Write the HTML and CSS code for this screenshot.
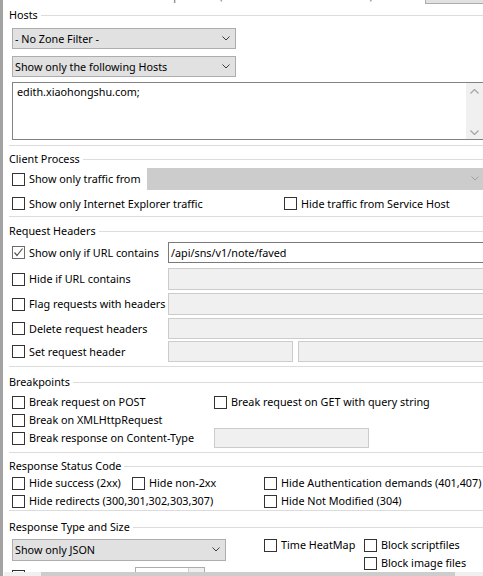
FILE: index.html
```html
<!DOCTYPE html>
<html>
<head>
<meta charset="utf-8">
<title>Filters</title>
<link rel="stylesheet" href="styles.css">
</head>
<body>
<div class="panel">
  <div class="topstrip">
    <span class="hint">FiddlerScript offers (click Rules &gt; Customize Rules).</span>
    <span class="topbtn"></span>
  </div>

  <div class="legend lg-hosts"><span>Hosts</span></div>
  <div class="combo combo-zone"><span>- No Zone Filter -</span><svg class="chev" width="8" height="5" viewBox="0 0 8 5"><polyline points="0.5,0.5 4,4 7.5,0.5"/></svg></div>
  <div class="combo combo-hosts"><span>Show only the following Hosts</span><svg class="chev" width="8" height="5" viewBox="0 0 8 5"><polyline points="0.5,0.5 4,4 7.5,0.5"/></svg></div>
  <div class="textarea">
    <span class="ta-text">edith.xiaohongshu.com;</span>
    <div class="vscroll">
      <svg class="sarrow" width="9" height="5" viewBox="0 0 9 5"><polyline points="0.5,4.5 4.5,0.5 8.5,4.5"/></svg>
      <svg class="sarrow" width="9" height="5" viewBox="0 0 9 5"><polyline points="0.5,0.5 4.5,4.5 8.5,0.5"/></svg>
    </div>
  </div>
  <div class="sep sep-hosts"></div>

  <div class="legend lg-client"><span>Client Process</span></div>
  <div class="cp-row1">
    <label class="chk"><span class="box"></span><span class="txt">Show only traffic from</span></label>
    <div class="combo combo-dis"><span></span><svg class="chev" width="8" height="5" viewBox="0 0 8 5"><polyline points="0.5,0.5 4,4 7.5,0.5"/></svg></div>
  </div>
  <div class="cp-row2">
    <label class="chk"><span class="box"></span><span class="txt">Show only Internet Explorer traffic</span></label>
    <label class="chk"><span class="box"></span><span class="txt">Hide traffic from Service Host</span></label>
  </div>
  <div class="sep sep-client"></div>

  <div class="legend lg-req"><span>Request Headers</span></div>
  <div class="rh-row rh-first">
    <label class="chk"><span class="box checked"><svg width="11" height="11" viewBox="0 0 11 11"><polyline points="1.5,5.5 4,8.5 9.5,1.5"/></svg></span><span class="txt">Show only if URL contains</span></label>
    <div class="field field-on">/api/sns/v1/note/faved</div>
  </div>
  <div class="rh-row rh-hide">
    <label class="chk"><span class="box"></span><span class="txt">Hide if URL contains</span></label>
    <div class="field"></div>
  </div>
  <div class="rh-row rh-flag">
    <label class="chk"><span class="box"></span><span class="txt">Flag requests with headers</span></label>
    <div class="field"></div>
  </div>
  <div class="rh-row rh-del">
    <label class="chk"><span class="box"></span><span class="txt">Delete request headers</span></label>
    <div class="field"></div>
  </div>
  <div class="rh-row rh-set">
    <label class="chk"><span class="box"></span><span class="txt">Set request header</span></label>
    <div class="field field-name"></div>
    <div class="field field-value"></div>
  </div>
  <div class="sep sep-req"></div>

  <div class="legend lg-bp"><span>Breakpoints</span></div>
  <div class="bp-row bp-first">
    <label class="chk"><span class="box"></span><span class="txt">Break request on POST</span></label>
    <label class="chk"><span class="box"></span><span class="txt">Break request on GET with query string</span></label>
  </div>
  <div class="bp-row">
    <label class="chk"><span class="box"></span><span class="txt">Break on XMLHttpRequest</span></label>
  </div>
  <div class="bp-row bp-last">
    <label class="chk"><span class="box"></span><span class="txt">Break response on Content-Type</span></label>
    <div class="field field-ct"></div>
  </div>
  <div class="sep sep-bp"></div>

  <div class="legend lg-status"><span>Response Status Code</span></div>
  <div class="st-row st-first">
    <label class="chk"><span class="box"></span><span class="txt">Hide success (2xx)</span></label>
    <label class="chk"><span class="box"></span><span class="txt">Hide non-2xx</span></label>
    <label class="chk"><span class="box"></span><span class="txt">Hide Authentication demands (401,407)</span></label>
  </div>
  <div class="st-row st-second">
    <label class="chk"><span class="box"></span><span class="txt">Hide redirects (300,301,302,303,307)</span></label>
    <label class="chk"><span class="box"></span><span class="txt">Hide Not Modified (304)</span></label>
  </div>
  <div class="sep sep-status"></div>

  <div class="legend lg-type"><span>Response Type and Size</span></div>
  <div class="type-block">
    <div class="type-left">
      <div class="combo combo-json"><span>Show only JSON</span><svg class="chev" width="8" height="5" viewBox="0 0 8 5"><polyline points="0.5,0.5 4,4 7.5,0.5"/></svg></div>
      <div class="size-row">
        <span class="box"></span>
        <div class="spin"><span class="spin-btn"></span></div>
      </div>
    </div>
    <div class="type-right">
      <label class="chk"><span class="box"></span><span class="txt">Time HeatMap</span></label>
      <label class="chk"><span class="box"></span><span class="txt">Block scriptfiles</span></label>
      <label class="chk chk-img"><span class="box"></span><span class="txt">Block image files</span></label>
    </div>
  </div>

  <div class="hscroll"><span class="hthumb"></span></div>
</div>
</body>
</html>
```

FILE: styles.css
```css
html, body {
  margin: 0;
  padding: 0;
  background: #ffffff;
  overflow: hidden;
}

body {
  width: 483px;
  height: 576px;
  font-family: "Noto Sans", "Segoe UI", sans-serif;
  font-size: 10.8px;
  color: #000;
}

.panel {
  position: relative;
  display: flex;
  flex-direction: column;
  box-sizing: border-box;
  width: 483px;
  height: 576px;
  overflow: hidden;
  border-left: 3px solid #a3a3a3;
  padding-left: 6px;
}

/* top strip (clipped content above) */
.topstrip {
  display: flex;
  height: 5px;
  overflow: hidden;
  flex: none;
}
.hint {
  margin-left: 111px;
  margin-top: -11px;
  line-height: 14px;
  white-space: nowrap;
  color: #6d6d6d;
}
.topbtn {
  margin-left: auto;
  width: 58px;
  height: 4px;
  box-sizing: border-box;
  background: #e1e1e1;
  border: 1px solid #adadad;
  border-top: none;
  border-right: none;
}

/* legends and separators */
.legend {
  display: flex;
  align-items: center;
  height: 14px;
  line-height: 14px;
  flex: none;
  white-space: nowrap;
}
.legend span { margin-top: -1px; }
.legend::after {
  content: "";
  flex: 1;
  height: 0;
  border-top: 1px solid #dcdcdc;
  margin-left: 3px;
}
.sep {
  height: 0;
  border-top: 1px solid #dcdcdc;
  flex: none;
}

.lg-hosts { margin-top: 3px; }
.lg-client { margin-top: 6px; }
.lg-req { margin-top: 7px; }
.lg-bp { margin-top: 8px; }
.lg-status { margin-top: 6px; }
.lg-type { margin-top: 9px; }

/* combo boxes */
.combo {
  display: flex;
  align-items: center;
  justify-content: space-between;
  box-sizing: border-box;
  height: 21px;
  background: #e1e1e1;
  border: 1px solid #adadad;
  padding: 0 5px 1px 2px;
  white-space: nowrap;
  flex: none;
}
.chev polyline {
  fill: none;
  stroke: #3c3c3c;
  stroke-width: 1;
}
.combo-zone {
  width: 224px;
  margin: 6px 0 0 3px;
}
.combo-hosts {
  width: 224px;
  margin: 7px 0 0 3px;
}
.combo-dis {
  height: 22px;
  background: #cccccc;
  border-color: #cccccc;
  margin-right: -2px;
}
.combo-dis .chev polyline { stroke: #a0a0a0; }
.combo-json {
  width: 214px;
  height: 22px;
  margin-top: 5px;
}

/* textarea */
.textarea {
  display: flex;
  justify-content: space-between;
  box-sizing: border-box;
  height: 58px;
  margin: 5px -2px 0 3px;
  border: 1px solid #828282;
  background: #fff;
  flex: none;
}
.ta-text {
  padding: 2px 0 0 4px;
  line-height: 14px;
}
.vscroll {
  width: 17px;
  margin-right: 1px;
  background: #f0f0f0;
  display: flex;
  flex-direction: column;
  justify-content: space-between;
  align-items: center;
  padding: 6px 0 4px;
  box-sizing: border-box;
}
.sarrow polyline {
  fill: none;
  stroke: #a6a6a6;
  stroke-width: 1.3;
}

.sep-hosts { margin-top: 5px; }
.sep-client { margin-top: 2px; }
.sep-req { margin-top: 4px; }
.sep-bp { margin-top: 4px; }
.sep-status { margin-top: 0; }

/* checkboxes */
.chk {
  display: flex;
  align-items: center;
  white-space: nowrap;
}
.txt {
  margin-top: -1px;
}
.box {
  display: inline-flex;
  align-items: center;
  justify-content: center;
  box-sizing: border-box;
  width: 13px;
  height: 13px;
  border: 1px solid #333333;
  background: #fff;
  margin-right: 4px;
  flex: none;
}
.box.checked { border-color: #6b6b6b; }
.box.checked polyline {
  fill: none;
  stroke: #555;
  stroke-width: 1.2;
}

/* client process */
.cp-row1 {
  display: grid;
  grid-template-columns: 135px 1fr;
  align-items: center;
  height: 22px;
  margin: 2px 0 0 3px;
  flex: none;
}
.cp-row2 {
  display: grid;
  grid-template-columns: 272px 1fr;
  align-items: center;
  height: 21px;
  margin: 3px 0 0 3px;
  flex: none;
}

/* request headers */
.rh-row {
  display: grid;
  grid-template-columns: 156px 1fr;
  align-items: center;
  height: 21px;
  margin-left: 3px;
  flex: none;
}
.rh-first { margin-top: 4px; }
.rh-hide { margin-top: 5px; height: 22px; }
.rh-flag { margin-top: 3px; height: 22px; }
.rh-del { margin-top: 3px; }
.rh-set {
  grid-template-columns: 156px 125px 1fr;
  margin-top: 2px;
}
.field {
  box-sizing: border-box;
  height: 100%;
  background: #f0f0f0;
  border: 1px solid #cccccc;
  margin-right: -2px;
  padding: 0 0 1px 2px;
  display: flex;
  align-items: center;
  white-space: nowrap;
}
.field-on {
  background: #fff;
  border-color: #7a7a7a;
}
.field-name { margin-right: 0; }
.field-value { margin-left: 5px; }
.field-ct {
  width: 155px;
  height: 20px;
  margin-right: 0;
}

/* breakpoints */
.bp-row {
  display: grid;
  grid-template-columns: 202px 1fr;
  align-items: center;
  height: 18px;
  margin-left: 3px;
  flex: none;
}
.bp-first { margin-top: 4px; }
.bp-last { height: 20px; margin-top: -1px; }

/* status code */
.st-row {
  display: grid;
  align-items: center;
  height: 18px;
  margin-left: 3px;
  flex: none;
}
.st-first {
  grid-template-columns: 120px 132px 1fr;
  margin-top: 1px;
}
.st-second {
  grid-template-columns: 252px 1fr;
  margin-top: 0;
}

/* response type */
.type-block {
  display: flex;
  margin-left: 3px;
  flex: none;
}
.type-left {
  display: flex;
  flex-direction: column;
  width: 214px;
}
.size-row {
  display: flex;
  align-items: flex-start;
  margin-top: 6px;
  height: 12px;
}
.size-row .box { margin-top: 3px; }
.spin {
  margin-left: 106px;
  width: 70px;
  height: 14px;
  box-sizing: border-box;
  border: 1px solid #adadad;
  background: #fff;
  display: flex;
  justify-content: flex-end;
}
.spin-btn {
  width: 15px;
  border-left: 1px solid #d0d0d0;
  background: #f0f0f0;
}
.type-right {
  display: grid;
  grid-template-columns: 100px 1fr;
  grid-auto-rows: 18px;
  align-items: center;
  margin-left: 38px;
  margin-top: 2px;
}
.chk-img { grid-column: 2; }

/* horizontal scrollbar overlaying the bottom edge */
.hscroll {
  position: absolute;
  left: 1px;
  right: 0;
  bottom: 0;
  height: 4px;
  background: #f0f0f0;
}
.hthumb {
  position: absolute;
  left: 37px;
  width: 414px;
  top: 0;
  bottom: 0;
  background: #cdcdcd;
}
```
